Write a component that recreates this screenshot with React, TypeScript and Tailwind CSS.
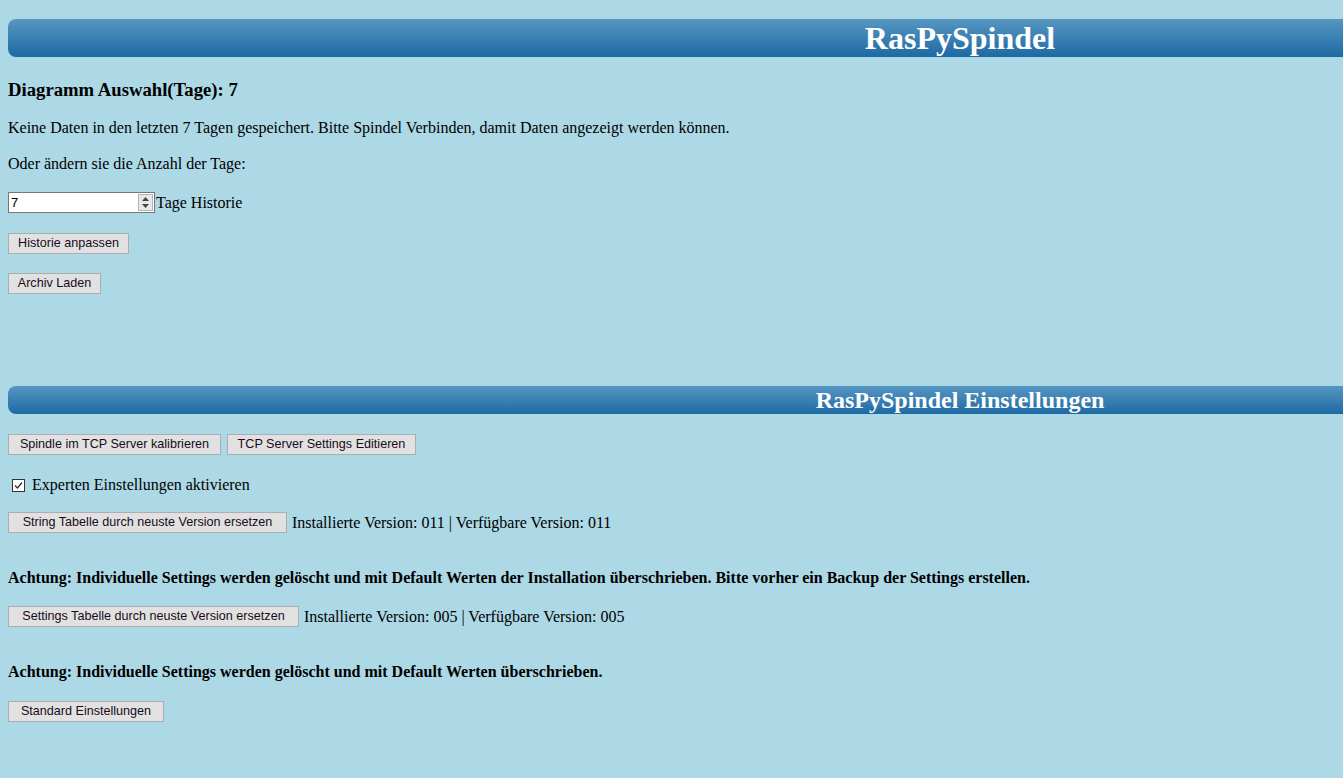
import React from "react";

const serif = "font-['Liberation_Serif',serif]";
const btn =
  "h-[21px] px-0 whitespace-nowrap overflow-hidden bg-[#e1e1e1] border border-[#adadad] text-[12.6px] leading-none text-[#1a0a1a] font-['Liberation_Sans',Arial,sans-serif]";

function Bar({ title, big }: { title: string; big?: boolean }) {
  return (
    <div
      className={`w-[1904px] ml-2 rounded-l-lg bg-gradient-to-b from-[#5596c2] to-[#1b6aa3] flex items-center justify-center ${
        big ? "h-[38px]" : "h-[28px]"
      }`}
    >
      <span className={`text-white font-bold ${serif} ${big ? "text-[32px]" : "text-[24px]"}`}>{title}</span>
    </div>
  );
}

export default function App() {
  return (
    <div className={`w-[1343px] h-[778px] overflow-hidden bg-[#add8e6] text-black ${serif}`}>
      <div className="h-[19px]" />
      <Bar title="RasPySpindel" big />

      <div className="px-2">
        <h3 className="mt-[22px] text-[18.7px] font-bold leading-[22px]">Diagramm Auswahl(Tage): 7</h3>
        <p className="mt-[18px] text-[16px] leading-[18px]">
          Keine Daten in den letzten 7 Tagen gespeichert. Bitte Spindel Verbinden, damit Daten angezeigt werden können.
        </p>
        <p className="mt-[18px] text-[16px] leading-[18px]">Oder ändern sie die Anzahl der Tage:</p>

        <div className="mt-[19px] flex items-center h-[21px]">
          <div className="w-[147px] h-[21px] bg-white border border-[#767676] flex items-center justify-between pl-[2px] pr-[1px]">
            <span className="text-[13px] font-['Liberation_Sans',Arial,sans-serif]">7</span>
            <div className="w-[15px] h-[17px] bg-[#e8e8e8] border border-[#b5b5b5] flex flex-col items-center justify-center gap-[3px]">
              <svg width="7" height="4" viewBox="0 0 7 4"><path d="M0 4L3.5 0L7 4Z" fill="#444" /></svg>
              <svg width="7" height="4" viewBox="0 0 7 4"><path d="M0 0L3.5 4L7 0Z" fill="#444" /></svg>
            </div>
          </div>
          <span className="ml-[1px] text-[16px]">Tage Historie</span>
        </div>

        <div className="mt-[20px] flex">
          <button className={`${btn} w-[121px]`}>Historie anpassen</button>
        </div>
        <div className="mt-[19px] flex">
          <button className={`${btn} w-[93px]`}>Archiv Laden</button>
        </div>
      </div>

      <div className="h-[92px]" />
      <Bar title="RasPySpindel Einstellungen" />

      <div className="px-2">
        <div className="mt-[20px] flex gap-[6px]">
          <button className={`${btn} w-[213px]`}>Spindle im TCP Server kalibrieren</button>
          <button className={`${btn} w-[189px]`}>TCP Server Settings Editieren</button>
        </div>

        <div className="mt-[21px] flex items-center h-[18px]">
          <div className="ml-[4px] w-[13px] h-[13px] border border-[#333] bg-white flex items-center justify-center">
            <svg width="11" height="11" viewBox="0 0 11 11">
              <path d="M2 5.5L4.5 8L9 2.5" stroke="#333" strokeWidth="1.3" fill="none" />
            </svg>
          </div>
          <span className="ml-[7px] text-[16px]">Experten Einstellungen aktivieren</span>
        </div>

        <div className="mt-[18px] flex items-center h-[21px]">
          <button className={`${btn} w-[279px]`}>String Tabelle durch neuste Version ersetzen</button>
          <span className="ml-[5px] text-[16px]">Installierte Version: 011 | Verfügbare Version: 011</span>
        </div>

        <p className="mt-[36px] text-[16px] font-bold leading-[18px]">
          Achtung: Individuelle Settings werden gelöscht und mit Default Werten der Installation überschrieben. Bitte vorher ein Backup der Settings erstellen.
        </p>

        <div className="mt-[19px] flex items-center h-[21px]">
          <button className={`${btn} w-[291px]`}>Settings Tabelle durch neuste Version ersetzen</button>
          <span className="ml-[5px] text-[16px]">Installierte Version: 005 | Verfügbare Version: 005</span>
        </div>

        <p className="mt-[36px] text-[16px] font-bold leading-[18px]">
          Achtung: Individuelle Settings werden gelöscht und mit Default Werten überschrieben.
        </p>

        <div className="mt-[20px] flex">
          <button className={`${btn} w-[156px]`}>Standard Einstellungen</button>
        </div>
      </div>
    </div>
  );
}
